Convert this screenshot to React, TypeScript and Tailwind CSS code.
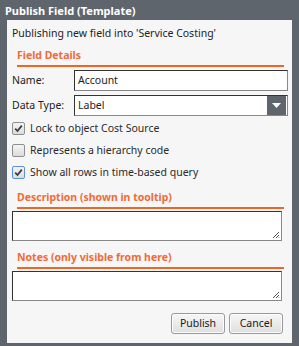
import React from 'react'

const FONT = { fontFamily: '"Noto Sans", "Open Sans", sans-serif' }

function SectionHeader({ title }: { title: string }) {
  return (
    <div className="ml-[10px] mr-[8px] border-b-2 border-[#f26522] pb-[2px] text-[10.5px] font-bold leading-[15px] text-[#f26a36]">
      {title}
    </div>
  )
}

function Check({ checked, focused, label }: { checked: boolean; focused?: boolean; label: string }) {
  return (
    <div className="flex h-[22px] items-center gap-[5px] pl-[5px] text-[10.5px] leading-[15px]">
      <span
        className={`flex h-[13px] w-[13px] items-center justify-center rounded-[2px] border bg-gradient-to-b from-[#f4f4f4] to-[#dcdcdc] ${
          focused ? 'border-[#5b8fe0]' : 'border-[#8e8f8f]'
        }`}
      >
        {checked && (
          <svg width="9" height="9" viewBox="0 0 9 9">
            <path d="M1.2 4.6 L3.5 7 L7.8 1.6" fill="none" stroke="#3c3c3c" strokeWidth="1.8" />
          </svg>
        )}
      </span>
      <span className="text-[#2a2a2a]">{label}</span>
    </div>
  )
}

function TextArea() {
  return (
    <div className="relative ml-[5px] mr-[10px] h-[30px] border border-t-[#333] border-l-[#333] border-b-[#888] border-r-[#888] bg-white">
      <svg className="absolute bottom-[1px] right-[1px]" width="8" height="8" viewBox="0 0 8 8">
        <path d="M7 1 L1 7 M7 4 L4 7 M7 6.5 L6.5 7" stroke="#555" strokeWidth="1" />
      </svg>
    </div>
  )
}

function Btn({ label }: { label: string }) {
  return (
    <button
      type="button"
      className="h-[21px] w-[54px] rounded-[3px] border border-[#9a9a9a] bg-gradient-to-b from-[#f7f7f7] to-[#dedede] text-[10.5px] leading-[15px] text-[#1a1a1a] shadow-[inset_0_0_0_1px_#fcfcfc]"
    >
      {label}
    </button>
  )
}

export default function App() {
  return (
    <div className="h-[346px] w-[299px] overflow-hidden bg-[#5f656d] text-[10.5px] leading-[15px]" style={FONT}>
      <div className="flex h-[20px] items-center pl-[5px] text-[11px] font-bold text-white">
        Publish Field (Template)
      </div>
      <div className="ml-[7px] flex h-[323px] w-[285px] flex-col bg-[#f6f6f6]">
        <p className="mt-[6px] pl-[5px] text-[#222]">
          Publishing new field into 'Service Costing'
        </p>

        <div className="mt-[7px]">
          <SectionHeader title="Field Details" />
        </div>

        <div className="mt-[3px] flex h-[21px] items-center pl-[5px] pr-[4px]">
          <span className="w-[62px] text-[#222]">Name:</span>
          <div className="flex h-[21px] flex-1 items-center border border-t-[#333] border-l-[#333] border-b-[#888] border-r-[#888] bg-white pl-[3px] text-[#222]">
            Account
          </div>
        </div>

        <div className="mt-[4px] flex h-[21px] items-center pl-[5px] pr-[4px]">
          <span className="w-[62px] text-[#222]">Data Type:</span>
          <div className="flex h-[21px] flex-1 items-center border border-t-[#333] border-l-[#333] border-b-[#888] border-r-[#888] bg-white pl-[3px] text-[#222]">
            <span className="flex-1">Label</span>
            <span className="mr-[1px] flex h-[19px] w-[19px] items-center justify-center bg-[#5f656d]">
              <svg width="9" height="5" viewBox="0 0 9 5">
                <path d="M0 0 H9 L4.5 5 Z" fill="#fff" />
              </svg>
            </span>
          </div>
        </div>

        <div className="mt-[1px]">
          <Check checked label="Lock to object Cost Source" />
          <Check checked={false} label="Represents a hierarchy code" />
          <Check checked focused label="Show all rows in time-based query" />
        </div>

        <div className="mt-[7px]">
          <SectionHeader title="Description (shown in tooltip)" />
        </div>
        <div className="mt-[2px]">
          <TextArea />
        </div>

        <div className="mt-[9px]">
          <SectionHeader title="Notes (only visible from here)" />
        </div>
        <div className="mt-[2px]">
          <TextArea />
        </div>

        <div className="mt-[12px] flex justify-end gap-[4px] pr-[9px]">
          <Btn label="Publish" />
          <Btn label="Cancel" />
        </div>
      </div>
    </div>
  )
}
